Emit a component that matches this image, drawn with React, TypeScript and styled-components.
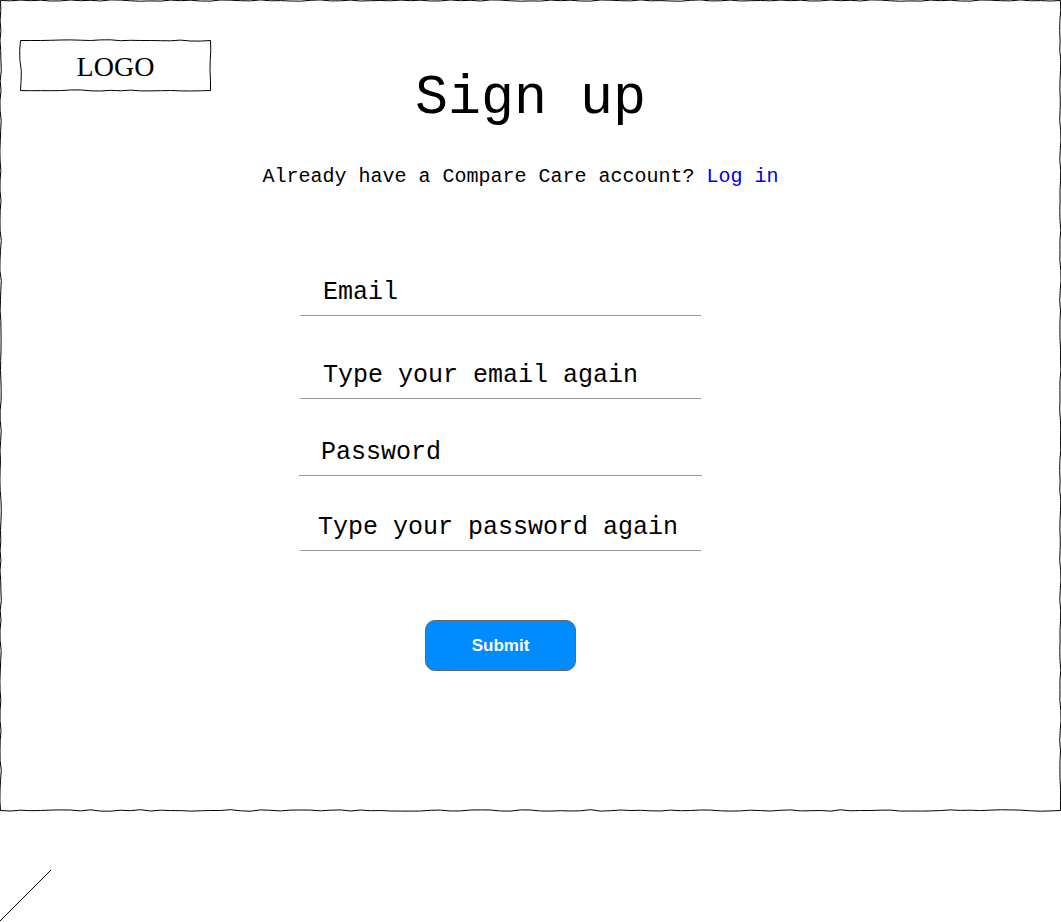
import React from "react";
import styled, { createGlobalStyle } from "styled-components";

const GlobalStyle = createGlobalStyle`
  *, *::before, *::after { box-sizing: border-box; }
  body { margin: 0; background: #fff; color: #000; }
`;

const MONO = `"Liberation Mono", "Courier New", monospace`;

const Page = styled.div`
  display: flex;
  flex-direction: column;
  overflow: hidden;
  font-family: ${MONO};
`;

const Panel = styled.main`
  position: relative;
  display: flex;
  flex-direction: column;
  padding: 40px 20px 140px;
`;

const Outline = styled.svg`
  position: absolute;
  inset: 0;
  width: 100%;
  height: 100%;
  overflow: visible;
  fill: none;
  stroke: #000;
  pointer-events: none;
`;

const Header = styled.header`
  display: grid;
  grid-template-columns: 1fr auto 1fr;
  align-items: start;
`;

const Logo = styled.div`
  position: relative;
  display: flex;
  align-items: center;
  justify-content: center;
  width: 191px;
  height: 51px;
  padding-top: 2px;
  font-family: "Liberation Serif", "Times New Roman", serif;
  font-size: 28px;
  line-height: 32px;
`;

const Title = styled.h1`
  margin: 28px 0 0;
  font-size: 55px;
  font-weight: 400;
  line-height: 62px;
`;

const Prompt = styled.p`
  margin: 35px 0 0;
  padding-right: 20px;
  font-size: 20px;
  line-height: 24px;
  text-align: center;
`;

const Link = styled.a`
  color: #0000ee;
  text-decoration: none;
`;

const Form = styled.form`
  display: flex;
  flex-direction: column;
  align-items: center;
  gap: 33px;
  margin-top: 83px;
  padding-right: 60px;
`;

const FieldGroup = styled.div<{ $gap: number }>`
  display: flex;
  flex-direction: column;
  align-items: center;
  gap: ${({ $gap }) => $gap}px;
`;

const Field = styled.input<{ $wide?: boolean; $inset?: number }>`
  width: ${({ $wide }) => ($wide ? 403 : 401)}px;
  height: 44px;
  padding: 0 0 2px ${({ $inset = 23 }) => $inset}px;
  border: 0;
  border-bottom: 1px solid #999;
  border-radius: 0;
  outline: none;
  background: transparent;
  color: #000;
  font-family: ${MONO};
  font-size: 25px;

  &::placeholder {
    color: #000;
    opacity: 1;
  }
`;

const SubmitButton = styled.button`
  width: 151px;
  height: 51px;
  margin-top: 36px;
  padding: 0;
  border: 1px solid #666;
  border-radius: 10px;
  background: #008cff;
  color: #fff;
  font-family: "Liberation Sans", Arial, sans-serif;
  font-size: 17px;
  font-weight: 700;
`;

const Slash = styled.svg`
  display: block;
  width: 51px;
  height: 51px;
  margin-top: 59px;
  stroke: #000;
`;

type Edges = { top: number[]; right: number[]; bottom: number[]; left: number[] };

const STEP = 10;

/* Hand-drawn rectangle: every edge has a node each 10 units, pushed off the line by tenths. */
function sketchPath(width: number, height: number, edges: Edges) {
  const w = width - 1;
  const h = height - 1;
  const at = (offsets: number[], i: number) => (offsets[i % offsets.length] ?? 0) / 10;
  const points: [number, number][] = [[0, 0]];
  for (let i = 1; i * STEP < w; i++) points.push([i * STEP, at(edges.top, i)]);
  points.push([w, 0]);
  for (let i = 1; i * STEP < h; i++) points.push([w + at(edges.right, i), i * STEP]);
  points.push([w, h]);
  for (let i = Math.ceil(w / STEP) - 1; i > 0; i--) points.push([i * STEP, h + at(edges.bottom, i)]);
  points.push([0, h]);
  for (let i = Math.ceil(h / STEP) - 1; i > 0; i--) points.push([at(edges.left, i), i * STEP]);
  return "M" + points.map(([x, y]) => `${(x + 0.5).toFixed(1)} ${(y + 0.5).toFixed(1)}`).join("L") + "Z";
}

const LOGO_EDGES: Edges = {
  top: [0, 0, 0, -2, -5, -6, -3, 0, -6, -7, 2, -2, 0, 0, 2, 3, -4, 5, 6],
  right: [0, 3, -3, -5, 0],
  bottom: [0, 2, 1, 2, 1, -5, -6, 3, 5, -2, 3, -4, 4, 4, 2, 0, 4, 5, 3],
  left: [0, -8, -6, 8, 6],
};

const FRAME_EDGES: Edges = {
  top: [
    0, 3, -4, 2, -3, 5, 4, -5, 2, -2, 5, -6, -4, 3, 7, 4, 6, -4, 2, -3, 5, 6, -5, -3, 2, 4, -6, 3, 1, 5, 7, -2,
    -6, 4, 3, -4, 5, 2,
  ],
  right: [
    0, 2, -6, -8, -4, -7, 3, 0, -5, -6, -2, -4, -8, 2, 4, -3, -7, 2, 0, -5, -4, -7, -5, 3, -6, -5, -6, 3, 5, -3,
    -8, 0, -5, -6, -4, 1, 0, 4, -5, -6, -5, -8, 0, 2,
  ],
  bottom: [
    0, 5, -3, 2, 0, -4, -6, -5, 4, -7, 6, 7, -3, 2, -8, 5, -3, 1, 1, 6, 3, 0, 0, -8, 3, 7, -6, -2, 4, -4, -5, -4,
    3, -3, -6, 5, -5, 2, 0, 5, 6, 6, 5, -2, -4, 5, 4, -5, -6, -5, 5, 6, -6, -5, 5, 6, 2, 5, 3, -8, 6, 2, -5, 0, -2,
    3, 5, -4, 2, 0, -5, -4, 3, 6, 4, -3, 1, 5, -2, -6, 4, 2, 0, 6, -7, 3, 0, 0, -3, -4, 6, 5, 6, 4, 1, -6, -1, -3,
    1, -4, -7, -6, -4, 3, 7, 4,
  ],
  left: [
    0, 3, -4, 4, -5, 2, 4, 8, -3, 5, -5, -4, 7, 2, -2, -6, -4, 3, -4, -5, 5, -3, -5, -4, 8, 0, -5, -6, 8, 3, 0, -4,
    3, 5, 6, 5, 2, 0, 4, 7, 6, -4, -3, 7, 2, -5, 0, -4, -6, -3, 5, 8, 5,
  ],
};

function SketchOutline({ width, height, edges }: { width: number; height: number; edges: Edges }) {
  return (
    <Outline viewBox={`0 0 ${width} ${height}`} preserveAspectRatio="none" aria-hidden="true">
      <path d={sketchPath(width, height, edges)} vectorEffect="non-scaling-stroke" />
    </Outline>
  );
}

export default function App() {
  return (
    <Page>
      <GlobalStyle />
      <Panel>
        <SketchOutline width={1061} height={811} edges={FRAME_EDGES} />
        <Header>
          <Logo>
            <SketchOutline width={191} height={51} edges={LOGO_EDGES} />
            LOGO
          </Logo>
          <Title>Sign up</Title>
        </Header>
        <Prompt>
          Already have a Compare Care account? <Link href="#login">Log in</Link>
        </Prompt>
        <Form onSubmit={(event) => event.preventDefault()}>
          <FieldGroup $gap={39}>
            <Field type="email" placeholder="Email" aria-label="Email" />
            <Field type="email" placeholder="Type your email again" aria-label="Type your email again" />
          </FieldGroup>
          <FieldGroup $gap={31}>
            <Field $wide $inset={22} type="password" placeholder="Password" aria-label="Password" />
            <Field
              $inset={18}
              type="password"
              placeholder="Type your password again"
              aria-label="Type your password again"
            />
          </FieldGroup>
          <SubmitButton type="submit">Submit</SubmitButton>
        </Form>
      </Panel>
      <Slash viewBox="0 0 51 51" aria-hidden="true">
        <line x1="0" y1="51" x2="51" y2="0" />
      </Slash>
    </Page>
  );
}
